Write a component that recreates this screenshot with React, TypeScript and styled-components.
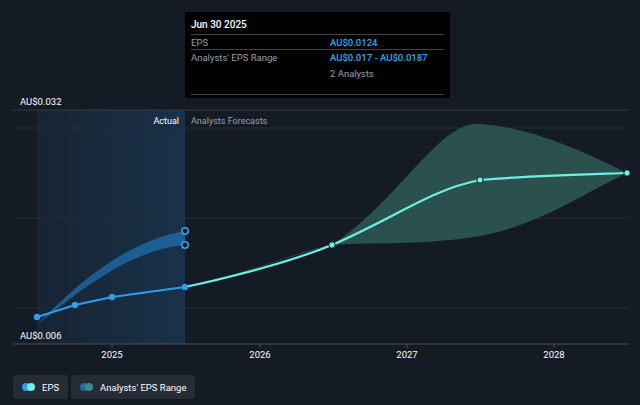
import React from "react";
import styled, { createGlobalStyle } from "styled-components";

const Global = createGlobalStyle`
  body { margin: 0; background: #151b24; font-family: Roboto, "Liberation Sans", sans-serif; }
`;

const Page = styled.div`
  width: 640px; height: 405px; display: flex; flex-direction: column; overflow: hidden;
`;
const ChartArea = styled.div`
  position: relative; width: 640px; height: 368px;
`;
const Tooltip = styled.div`
  position: absolute; left: 185px; top: 12px; width: 253px; height: 68px;
  background: #000; padding: 6px 6px 12px; color: #9aa0a8; font-size: 9.5px;
`;
const TipTitle = styled.div`
  color: #fff; font-weight: 500; font-size: 10px; padding: 1px 0 4px; border-bottom: 1px solid #444;
`;
const TipRow = styled.div<{ $border?: boolean }>`
  display: grid; grid-template-columns: 139px 1fr; padding: 2px 0 1px;
  border-bottom: ${(p) => (p.$border ? "1px solid #444" : "none")};
`;
const Blue = styled.span`color: #2eaaf0; font-weight: 500;`;
const Sub = styled.div`color: #9aa0a8; padding-top: 2px;`;
const TipEnd = styled.div`border-bottom: 1px solid #444; margin-top: 14px;`;

const Legend = styled.div`
  display: flex; gap: 3px; padding: 7px 13px 0;
`;
const LegendBtn = styled.div`
  display: flex; align-items: center; gap: 6px; height: 24px; padding: 0 9px;
  background: #262c35; border-radius: 3px; color: #fff; font-size: 9.5px;
`;
const Dots = styled.span<{ $a: string; $b: string }>`
  position: relative; width: 14px; height: 8px; display: inline-block;
  &::before, &::after { content: ""; position: absolute; top: 0; width: 8px; height: 8px; border-radius: 50%; }
  &::before { left: 0; background: ${(p) => p.$a}; }
  &::after { left: 5px; background: ${(p) => p.$b}; }
`;

const Chart = () => (
  <svg width="640" height="368" style={{ display: "block" }}>
    <defs>
      <linearGradient id="act" x1="0" x2="1">
        <stop offset="0" stopColor="#1a3550" stopOpacity="0.35" />
        <stop offset="1" stopColor="#1a3a58" stopOpacity="0.75" />
      </linearGradient>
    </defs>
    <rect x="37" y="110" width="148" height="234" fill="url(#act)" />
    <line x1="13" x2="628" y1="110" y2="110" stroke="#363d47" />
    <line x1="13" x2="628" y1="128" y2="128" stroke="#262d37" />
    <line x1="13" x2="628" y1="218" y2="218" stroke="#262d37" />
    <line x1="13" x2="628" y1="308" y2="308" stroke="#262d37" />
    <line x1="13" x2="628" y1="344" y2="344" stroke="#4a515b" />
    {[112, 260, 407, 554].map((x) => <line key={x} x1={x} x2={x} y1="344" y2="348" stroke="#4a515b" />)}
    <text x="20" y="105" fill="#fff" fontSize="9.5" fontFamily="Roboto">AU$0.032</text>
    <text x="20" y="339" fill="#fff" fontSize="9.5" fontFamily="Roboto">AU$0.006</text>
    <text x="179" y="124" fill="#fff" fontSize="9" textAnchor="end" fontFamily="Roboto">Actual</text>
    <text x="191" y="124" fill="#9aa0a8" fontSize="9" fontFamily="Roboto">Analysts Forecasts</text>
    {[["2025", 112], ["2026", 260], ["2027", 407], ["2028", 554]].map(([t, x]) => (
      <text key={t} x={x} y="358" fill="#fff" fontSize="9.5" textAnchor="middle" fontFamily="Roboto">{t}</text>
    ))}
    <path d="M37 325 C 80 280, 130 240, 185 231 L 185 245 C 130 250, 80 290, 37 325 Z" fill="#1f6aa8" opacity="0.8" />
    <path d="M185 287 C 260 270, 300 250, 332 245 C 400 200, 440 120, 480 124 C 540 128, 600 160, 627 173 C 590 190, 540 225, 480 236 C 420 246, 360 242, 332 245 C 280 258, 230 280, 185 287 Z" fill="#2f5a56" opacity="0.85" />
    <path d="M37 317 L75 305 L112 297 L185 287" stroke="#2e9df0" strokeWidth="2.2" fill="none" />
    <path d="M185 287 C 240 275, 290 262, 332 245 C 400 215, 430 190, 480 180 C 540 175, 600 174, 627 173" stroke="#6ff0e6" strokeWidth="2.2" fill="none" />
    {[[37, 317], [75, 305], [112, 297], [185, 287]].map(([x, y]) => (
      <circle key={x} cx={x} cy={y} r="3.2" fill="#2e9df0" />
    ))}
    {[[332, 245], [480, 180], [627, 173]].map(([x, y]) => (
      <circle key={x} cx={x} cy={y} r="3.2" fill="#6ff0e6" stroke="#151b24" strokeWidth="1" />
    ))}
    <circle cx="185" cy="231" r="3.2" fill="#151b24" stroke="#2eaaf0" strokeWidth="1.5" />
    <circle cx="185" cy="245" r="3.2" fill="#151b24" stroke="#2eaaf0" strokeWidth="1.5" />
  </svg>
);

export default function App() {
  return (
    <Page>
      <Global />
      <ChartArea>
        <Chart />
        <Tooltip>
          <TipTitle>Jun 30 2025</TipTitle>
          <TipRow $border><span>EPS</span><Blue>AU$0.0124</Blue></TipRow>
          <TipRow><span>Analysts' EPS Range</span><Blue>AU$0.017 - AU$0.0187</Blue></TipRow>
          <TipRow><span></span><Sub>2 Analysts</Sub></TipRow>
          <TipEnd />
        </Tooltip>
      </ChartArea>
      <Legend>
        <LegendBtn><Dots $a="#2e9df0" $b="#6ff0e6" />EPS</LegendBtn>
        <LegendBtn><Dots $a="#1f6aa8" $b="#3f8a84" />Analysts' EPS Range</LegendBtn>
      </Legend>
    </Page>
  );
}
